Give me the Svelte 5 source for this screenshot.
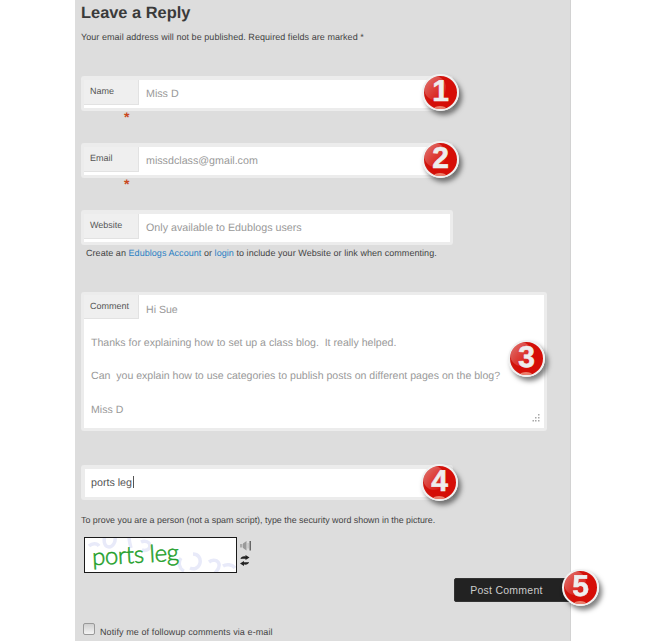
<script>
  const fields = [
    { label: "Name", value: "Miss D", badge: 1 },
    { label: "Email", value: "missdclass@gmail.com", badge: 2 }
  ];
</script>

{#snippet badge(n)}
  <span class="badge">
    <span class="gloss"></span>
    <span class="shine"></span>
    <span class="digit">{n}</span>
  </span>
{/snippet}

<main>
  <h2>Leave a Reply</h2>
  <p class="intro">Your email address will not be published. Required fields are marked *</p>

  {#each fields as f}
    <div class="row">
      <div class="box">
        <div class="field">
          <div class="tab">{f.label}</div>
          <div class="input">{f.value}</div>
        </div>
      </div>
      <div class="badge-slot">{@render badge(f.badge)}</div>
      <div class="req">*</div>
    </div>
  {/each}

  <div class="row website">
    <div class="box">
      <div class="field">
        <div class="tab">Website</div>
        <div class="input">Only available to Edublogs users</div>
      </div>
    </div>
    <p class="note">Create an <a href="#top">Edublogs Account</a> or <a href="#top">login</a> to include your Website or link when commenting.</p>
  </div>

  <div class="comment-wrap">
    <div class="comment">
      <div class="comment-inner">
        <div class="comment-head">
          <div class="tab">Comment</div>
          <div class="first-line">Hi Sue</div>
        </div>
        <div class="text">Thanks for explaining how to set up a class blog.  It really helped.

Can  you explain how to use categories to publish posts on different pages on the blog?

Miss D</div>
      </div>
      <svg class="grip" width="10" height="10" viewBox="0 0 10 10">
        <g fill="#a8a8a8">
          <rect x="8" y="0" width="1.500" height="1.500" />
          <rect x="5" y="3" width="1.500" height="1.500" />
          <rect x="8" y="3" width="1.500" height="1.500" />
          <rect x="2.500" y="6" width="1.500" height="1.500" />
          <rect x="5" y="6" width="1.500" height="1.500" />
          <rect x="8" y="6" width="1.500" height="1.500" />
        </g>
      </svg>
    </div>
    <div class="badge-slot three">{@render badge(3)}</div>
  </div>

  <div class="captcha-field">
    <div class="captcha-input">ports leg<span class="caret"></span></div>
    <div class="badge-slot four">{@render badge(4)}</div>
  </div>

  <p class="prove">To prove you are a person (not a spam script), type the security word shown in the picture.</p>

  <div class="captcha">
    <div class="captcha-img">
      <svg class="scribble" width="151" height="34" viewBox="0 0 151 34">
        <g fill="none" stroke="#e8eaf9" stroke-width="3.500">
          <path d="M4 8c3-3 8-3 10 0" />
          <path d="M20 -2c-2 6 0 11 4 11s7-5 6-11" />
          <path d="M44 -2c0 5 1 8 2 12" />
          <path d="M56 4c4-2 9 0 9 4s-5 5-8 4" />
          <path d="M96 20c-3 4-2 11 3 13M108 16c5 0 8 4 7 9s-6 7-10 5" />
          <path d="M124 24c4-3 9-2 10 2s-3 8-5 10" />
          <path d="M138 28c3-2 9-2 12 2" />
        </g>
      </svg>
      <span class="captcha-word">ports leg</span>
    </div>
    <div class="captcha-icons">
      <svg width="12" height="11" viewBox="0 0 12 11">
        <path d="M0 4h2.500v3.500H0z" fill="#aaa" />
        <path d="M3 3.500L6.500 1v9.500L3 8z" fill="#999" />
        <path d="M7.500 3h1.200v5.500H7.500z" fill="#bbb" />
        <path d="M9.500 1h1.500v9.500H9.500z" fill="#666" />
      </svg>
      <svg width="10" height="11" viewBox="0 0 10 11">
        <path d="M0.500 4C1 1.800 3 1 5.500 1.500V0L9.500 2.500 5.500 5V3.800C3.500 3.500 2.500 3.600 0.500 4z" fill="#222" />
        <path d="M9 7C8.500 9.200 6.500 10 4 9.500V11L0 8.500 4 6v1.200C6 7.500 7 7.400 9 7z" fill="#222" />
      </svg>
    </div>
  </div>

  <div class="submit">
    <button type="button">Post Comment</button>
    <div class="badge-slot five">{@render badge(5)}</div>
  </div>

  <label class="notify">
    <span class="check"></span>
    Notify me of followup comments via e-mail
  </label>
</main>

<style>
  :global(body) {
    margin: 0;
    background: #fff;
    font-family: "Liberation Sans", Arial, sans-serif;
  }

  main {
    box-sizing: border-box;
    width: 496px;
    height: 641px;
    margin-left: 75px;
    padding: 2px 0 0 6px;
    background: #dddddd;
    border-right: 1px solid #d2d2d2;
    color: #444;
    text-rendering: geometricPrecision;
    filter: blur(0.4px);
  }

  h2 {
    margin: 0;
    font-size: 16.4px;
    line-height: 22px;
    font-weight: bold;
    color: #3a3a3a;
  }

  .intro {
    margin: 7px 0 0;
    font-size: 9px;
    line-height: 12px;
    letter-spacing: 0.05px;
    color: #444;
  }

  /* text inputs */
  .row {
    position: relative;
    width: 372px;
    height: 34px;
    margin-top: 33px;
  }

  .box {
    box-sizing: border-box;
    height: 35px;
    padding: 4px 3px 3px;
    background: #ececec;
    border-radius: 3px;
  }

  .field {
    display: flex;
    height: 28px;
    background: #fff;
  }

  .tab {
    box-sizing: border-box;
    flex: 0 0 55px;
    height: 25px;
    padding: 5px 0 0 6px;
    background: #efefef;
    border-right: 1px solid #e2e2e2;
    border-bottom: 1px solid #e2e2e2;
    font-size: 9px;
    line-height: 12px;
    color: #555;
  }

  .input {
    flex: 1;
    padding-left: 7px;
    font-size: 10.7px;
    line-height: 28px;
    color: #999;
  }

  .req {
    position: absolute;
    left: 43px;
    top: 34px;
    font-size: 14px;
    line-height: 14px;
    font-weight: bold;
    color: #c9491f;
  }

  .row.website {
    height: auto;
  }

  .note {
    margin: 2px 0 0 5px;
    font-size: 9px;
    line-height: 12px;
    letter-spacing: 0.05px;
    white-space: nowrap;
    color: #444;
  }

  a {
    color: #2a7fc4;
    text-decoration: none;
  }

  /* comment box */
  .comment-wrap {
    position: relative;
    width: 466px;
    margin-top: 33px;
  }

  .comment {
    position: relative;
    box-sizing: border-box;
    height: 139px;
    padding: 3px;
    background: #ececec;
    border-radius: 3px;
  }

  .comment-inner {
    height: 133px;
    background: #fff;
    font-size: 10.57px;
    line-height: 16.65px;
    color: #999;
  }

  .comment-head {
    display: flex;
    height: 30px;
  }

  .comment-head .tab {
    height: 24px;
    padding-top: 5px;
  }

  .first-line {
    padding: 7px 0 0 7px;
  }

  .text {
    margin-top: 8px;
    padding: 2px 0 0 7px;
    white-space: pre-wrap;
  }

  .grip {
    position: absolute;
    right: 7px;
    bottom: 7px;
  }

  /* captcha */
  .captcha-field {
    position: relative;
    width: 372px;
    margin-top: 34px;
  }

  .captcha-input {
    box-sizing: border-box;
    height: 35px;
    padding-left: 6px;
    border: solid #ececec;
    border-width: 4px 3px 3px 4px;
    border-radius: 3px;
    background: #fff;
    font-size: 10.7px;
    line-height: 28px;
    color: #555;
  }

  .caret {
    display: inline-block;
    width: 1px;
    height: 12px;
    margin-left: 1px;
    vertical-align: -2px;
    background: #555;
  }

  .prove {
    margin: 14px 0 0;
    font-size: 8.9px;
    line-height: 12px;
    color: #444;
  }

  .captcha {
    display: flex;
    gap: 3px;
    margin: 11px 0 0 3px;
  }

  .captcha-img {
    position: relative;
    box-sizing: border-box;
    width: 153px;
    height: 36px;
    border: 1px solid #1a1a1a;
    background: #fff;
    overflow: hidden;
  }

  .scribble {
    position: absolute;
    left: 0;
    top: 0;
  }

  .captcha-word {
    position: absolute;
    left: 7px;
    top: 2px;
    font-family: "Lato", sans-serif;
    font-size: 24px;
    font-weight: 300;
    letter-spacing: -0.4px;
    line-height: 30px;
    color: #1f9f2a;
    -webkit-text-stroke: 0.5px #1f9f2a;
    transform: rotate(-3deg);
    white-space: nowrap;
  }

  .captcha-icons {
    display: flex;
    flex-direction: column;
    gap: 4px;
    padding-top: 3px;
  }

  /* submit */
  .submit {
    position: relative;
    display: flex;
    justify-content: flex-end;
    margin: 5px -5px 0 0;
  }

  button {
    width: 121px;
    height: 24px;
    padding: 0 16px 0 0;
    background: #222;
    border: 1px solid #333;
    border-radius: 2px;
    font-family: inherit;
    font-size: 10.5px;
    letter-spacing: 0.25px;
    color: #ccc;
  }

  .notify {
    display: flex;
    align-items: flex-start;
    gap: 5px;
    margin: 25px 0 0 2px;
    font-size: 9px;
    line-height: 10px;
    letter-spacing: 0.1px;
    color: #444;
  }

  .check {
    box-sizing: border-box;
    width: 12px;
    height: 12px;
    margin-top: -4px;
    border: 1px solid #999;
    border-radius: 2px;
    background: linear-gradient(#cfcfcf, #f4f4f4);
  }

  /* numbered callouts laid over the form */
  .badge-slot {
    position: absolute;
    right: -6px;
    top: -2px;
  }

  .badge-slot.three { right: 2px; top: 48px; }
  .badge-slot.four { right: -5px; top: -1px; }
  .badge-slot.five { right: -24px; top: -9px; }

  .badge {
    position: relative;
    display: block;
    box-sizing: border-box;
    width: 37px;
    height: 37px;
    border: 2.5px solid #f0f0f0;
    border-radius: 50%;
    background: radial-gradient(circle at 65% 55%, #d80c06 0, #d40f08 55%, #c8241c 100%);
    box-shadow: 3px 4px 5px rgba(0, 0, 0, 0.5);
    overflow: hidden;
    text-align: center;
  }

  .gloss {
    position: absolute;
    left: 0;
    top: 0;
    width: 22px;
    height: 24px;
    border-radius: 50%;
    background: linear-gradient(135deg, rgba(255, 255, 255, 0.4), rgba(255, 255, 255, 0));
  }

  .shine {
    position: absolute;
    left: 10px;
    bottom: -2px;
    width: 12px;
    height: 5px;
    border-radius: 50%;
    background: rgba(244, 165, 142, 0.75);
  }

  .digit {
    position: relative;
    display: block;
    font-size: 30px;
    line-height: 32px;
    font-weight: bold;
    color: #eee;
    -webkit-text-stroke: 0.6px #eee;
  }
</style>
